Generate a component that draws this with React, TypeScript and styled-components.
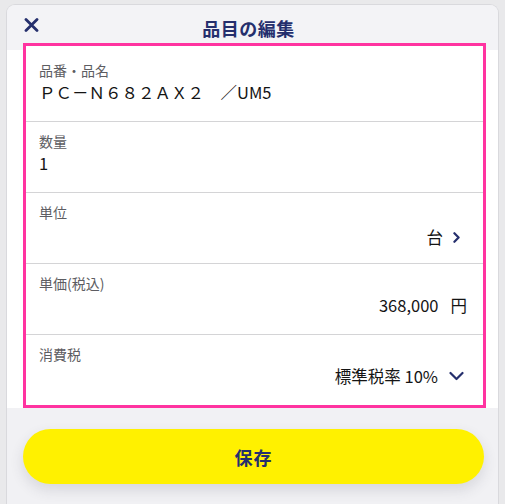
import styled, {createGlobalStyle} from 'styled-components';

const GlobalStyle = createGlobalStyle`
  html, body {
    margin: 0;
    padding: 0;
    background: #e9e9eb;
    overflow: hidden;
  }
  body {
    font-family: 'Noto Sans CJK JP', 'Noto Sans', sans-serif;
  }
`;

const navy = '#252f6d';

const Page = styled.div`
  padding: 4px 6px 0 6px;
  height: 504px;
  box-sizing: border-box;
`;

const Sheet = styled.div`
  border: 1px solid #d9d9dd;
  border-bottom: none;
  border-radius: 9px 9px 0 0;
  background: #f1f1f4;
  height: 520px;
  overflow: hidden;
`;

const Header = styled.header`
  position: relative;
  height: 45px;
  display: flex;
  align-items: center;
  justify-content: center;
  background: #f3f3f6;
`;

const CloseButton = styled.button`
  position: absolute;
  left: 14px;
  top: 10px;
  width: 20px;
  height: 20px;
  padding: 0;
  border: none;
  background: none;
  display: flex;
  align-items: center;
  justify-content: center;
`;

const Title = styled.h1`
  margin: 0 8px 0 0;
  font-size: 18px;
  font-weight: 700;
  color: ${navy};
  letter-spacing: 0.5px;
`;

const Body = styled.div`
  background: #fff;
  padding: 0 12px 0 16px;
`;

/* the list sits slightly over the header strip, so it needs its own layer */
const List = styled.ul`
  position: relative;
  z-index: 1;
  list-style: none;
  margin: -7px 0 0;
  padding: 5px 0 0;
  border: 3px solid #ff33a0;
  background: #fff;
`;

const Row = styled.li`
  height: 70px;
  padding: 9px 16px 0 13px;
  box-sizing: border-box;
  & + & {
    border-top: 1px solid #d4d4d6;
    height: 71px;
  }
`;

const Label = styled.div`
  font-size: 14px;
  line-height: 20px;
  color: #5d5d62;
`;

const Value = styled.div<{$align?: 'left' | 'right'; $top?: number}>`
  display: flex;
  align-items: center;
  justify-content: ${p => (p.$align === 'right' ? 'flex-end' : 'flex-start')};
  margin-top: ${p => p.$top ?? 1}px;
  font-size: 16.5px;
  line-height: 22px;
  color: #141414;
`;

const Unit = styled.span`
  margin-left: 12px;
`;

const Chevron = styled.svg<{$gap: number; $mr: number}>`
  margin-left: ${p => p.$gap}px;
  margin-right: ${p => p.$mr}px;
  flex: none;
`;

const Footer = styled.div`
  padding: 21px 14px 0 16px;
`;

const SaveButton = styled.button`
  width: 100%;
  height: 55px;
  border: none;
  border-radius: 28px;
  background: #fff100;
  box-shadow: 0 6px 14px rgba(60, 60, 80, 0.14);
  font-family: inherit;
  font-size: 18px;
  font-weight: 700;
  color: ${navy};
  letter-spacing: 1px;
`;

function CloseIcon() {
  return (
    <svg width="15" height="14" viewBox="0 0 15 14">
      <path
        d="M2 1.5 L13 12.5 M13 1.5 L2 12.5"
        stroke={navy}
        strokeWidth="2.8"
        strokeLinecap="round"
      />
    </svg>
  );
}

function App() {
  return (
    <Page>
      <GlobalStyle />
      <Sheet>
        <Header>
          <CloseButton aria-label="閉じる">
            <CloseIcon />
          </CloseButton>
          <Title>品目の編集</Title>
        </Header>
        <Body>
          <List>
            <Row>
              <Label>品番・品名</Label>
              <Value>ＰＣ－Ｎ６８２ＡＸ２　／UM5</Value>
            </Row>
            <Row>
              <Label>数量</Label>
              <Value>1</Value>
            </Row>
            <Row>
              <Label>単位</Label>
              <Value $align="right" $top={4}>
                台
                <Chevron
                  $gap={10}
                  $mr={7}
                  width="7"
                  height="11"
                  viewBox="0 0 7 11">
                  <path
                    d="M1.4 1.2 L5.6 5.5 L1.4 9.8"
                    fill="none"
                    stroke={navy}
                    strokeWidth="2.2"
                    strokeLinecap="round"
                    strokeLinejoin="round"
                  />
                </Chevron>
              </Value>
            </Row>
            <Row>
              <Label>単価(税込)</Label>
              <Value $align="right">
                368,000
                <Unit>円</Unit>
              </Value>
            </Row>
            <Row>
              <Label>消費税</Label>
              <Value $align="right">
                標準税率 10%
                <Chevron
                  $gap={11}
                  $mr={3}
                  width="15"
                  height="10"
                  viewBox="0 0 15 10">
                  <path
                    d="M1.5 2 L7.5 8 L13.5 2"
                    fill="none"
                    stroke={navy}
                    strokeWidth="2.2"
                    strokeLinecap="round"
                    strokeLinejoin="round"
                  />
                </Chevron>
              </Value>
            </Row>
          </List>
        </Body>
        <Footer>
          <SaveButton>保存</SaveButton>
        </Footer>
      </Sheet>
    </Page>
  );
}

export default App;
